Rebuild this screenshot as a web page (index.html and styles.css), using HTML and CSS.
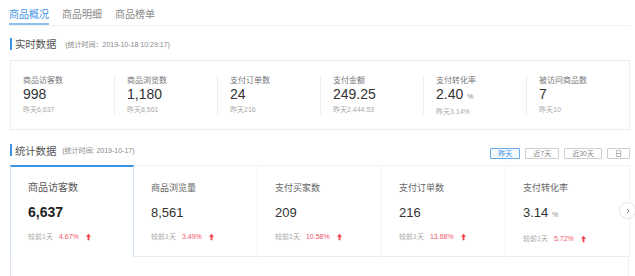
FILE: index.html
```html
<!DOCTYPE html>
<html lang="zh-CN">
<head>
<meta charset="utf-8">
<title>商品概况</title>
<link rel="stylesheet" href="styles.css">
</head>
<body>
<div class="page">
  <nav class="tabs">
    <span class="tab active">商品概况</span>
    <span class="tab">商品明细</span>
    <span class="tab">商品榜单</span>
  </nav>

  <div class="sec-head first">
    <span class="bar"></span>
    <span class="sec-title">实时数据</span>
    <span class="sec-sub wide">(统计时间：2019-10-18 10:29:17)</span>
  </div>

  <div class="rt-card">
    <div class="rt-col">
      <div class="rt-label">商品访客数</div>
      <div class="rt-value">998</div>
      <div class="rt-prev">昨天6,637</div>
    </div>
    <div class="rt-col">
      <div class="rt-label">商品浏览数</div>
      <div class="rt-value">1,180</div>
      <div class="rt-prev">昨天8,561</div>
    </div>
    <div class="rt-col">
      <div class="rt-label">支付订单数</div>
      <div class="rt-value">24</div>
      <div class="rt-prev">昨天216</div>
    </div>
    <div class="rt-col">
      <div class="rt-label">支付金额</div>
      <div class="rt-value">249.25</div>
      <div class="rt-prev">昨天2,444.53</div>
    </div>
    <div class="rt-col">
      <div class="rt-label">支付转化率</div>
      <div class="rt-value">2.40 <span class="unit">%</span></div>
      <div class="rt-prev">昨天3.14%</div>
    </div>
    <div class="rt-col">
      <div class="rt-label">被访问商品数</div>
      <div class="rt-value">7</div>
      <div class="rt-prev">昨天10</div>
    </div>
  </div>

  <div class="sec-head second">
    <span class="bar"></span>
    <span class="sec-title">统计数据</span>
    <span class="sec-sub">(统计时间: 2019-10-17)</span>
    <div class="ranges">
      <span class="range on">昨天</span>
      <span class="range">近7天</span>
      <span class="range">近30天</span>
      <span class="range">日</span>
    </div>
  </div>

  <div class="stats">
    <div class="stat-row">
      <div class="stat active">
        <div class="st-label">商品访客数</div>
        <div class="st-value">6,637</div>
        <div class="st-cmp">较前1天<span class="pct">4.67%</span><svg class="up" viewBox="0 0 6 8"><path d="M3 0 L6 3.6 L4.1 3.6 L4.1 8 L1.9 8 L1.9 3.6 L0 3.6 Z"/></svg></div>
      </div>
      <div class="stat">
        <div class="st-label">商品浏览量</div>
        <div class="st-value">8,561</div>
        <div class="st-cmp">较前1天<span class="pct">3.49%</span><svg class="up" viewBox="0 0 6 8"><path d="M3 0 L6 3.6 L4.1 3.6 L4.1 8 L1.9 8 L1.9 3.6 L0 3.6 Z"/></svg></div>
      </div>
      <div class="stat">
        <div class="st-label">支付买家数</div>
        <div class="st-value">209</div>
        <div class="st-cmp">较前1天<span class="pct">10.58%</span><svg class="up" viewBox="0 0 6 8"><path d="M3 0 L6 3.6 L4.1 3.6 L4.1 8 L1.9 8 L1.9 3.6 L0 3.6 Z"/></svg></div>
      </div>
      <div class="stat">
        <div class="st-label">支付订单数</div>
        <div class="st-value">216</div>
        <div class="st-cmp">较前1天<span class="pct">13.68%</span><svg class="up" viewBox="0 0 6 8"><path d="M3 0 L6 3.6 L4.1 3.6 L4.1 8 L1.9 8 L1.9 3.6 L0 3.6 Z"/></svg></div>
      </div>
      <div class="stat">
        <div class="st-label">支付转化率</div>
        <div class="st-value">3.14 <span class="unit">%</span></div>
        <div class="st-cmp">较前1天<span class="pct">5.72%</span><svg class="up" viewBox="0 0 6 8"><path d="M3 0 L6 3.6 L4.1 3.6 L4.1 8 L1.9 8 L1.9 3.6 L0 3.6 Z"/></svg></div>
      </div>
      <span class="next"><svg viewBox="0 0 8 8"><path d="M3 2 L5 4 L3 6" fill="none" stroke="#8a8a8a" stroke-width="1"/></svg></span>
    </div>
    <div class="panel"></div>
  </div>
</div>
</body>
</html>
```

FILE: styles.css
```css
* { box-sizing: border-box; }
html, body { margin: 0; padding: 0; background: #fff; }
body {
  font-family: "Liberation Sans", "Noto Sans CJK SC", sans-serif;
  color: #333;
}
.page { padding: 0 5px 0 10px; width: 635px; }

.tabs {
  display: flex;
  gap: 13px;
  height: 26px;
  border-bottom: 1px solid #f0f0f0;
  margin-left: -1px;
}
.tab {
  font-size: 10px;
  line-height: 14px;
  padding-top: 8px;
  height: 25px;
  color: #888;
  border-bottom: 2px solid transparent;
}
.tab.active { color: #3d93e6; border-bottom-color: #8cc0ef; }

.sec-head { display: flex; align-items: center; height: 13px; }
.sec-head.first { margin-top: 11px; margin-bottom: 10px; }
.sec-head.second { margin-top: 13px; margin-bottom: 8px; height: 14px; }
.bar { width: 2px; height: 12px; background: #3d93e6; margin-right: 3px; }
.sec-title { color: #555; letter-spacing: -0.2px; font-size: 10.5px; }
.sec-sub { font-size: 7px; color: #888; margin-left: 6px; }
.sec-sub.wide { margin-left: 9px; }

.ranges { margin-left: auto; display: flex; gap: 5px; align-self: flex-end; margin-bottom: -2px; }
.range {
  font-size: 7px;
  line-height: 9px;
  height: 11px;
  padding: 0 7px;
  border: 1px solid #cfcfcf;
  border-radius: 1px;
  color: #888;
}
.range.on { border-color: #6aa9e8; color: #3d93e6; background: #f4f9fe; }

.rt-card {
  display: grid;
  grid-template-columns: repeat(6, 1fr);
  border: 1px solid #eeeeee;
  padding: 14px 0;
  height: 70px;
}
.rt-col { border-left: 1px solid #eeeeee; padding-left: 12px; height: 40px; }
.rt-col:first-child { border-left: none; padding-left: 12px; }
.rt-label { font-size: 8px; line-height: 11px; color: #777; }
.rt-value { font-size: 14px; line-height: 15px; color: #333; margin-top: 1px; }
.rt-value .unit, .st-value .unit { font-size: 7px; color: #888; }
.rt-prev { font-size: 7px; line-height: 11px; color: #aaa; margin-top: 2px; }

.stats { position: relative; }
.stat-row {
  position: relative;
  display: grid;
  grid-template-columns: repeat(5, 1fr);
}
.stat {
  height: 92px;
  padding: 15px 0 0 17px;
  border-top: 1px solid #eef1f5;
  border-right: 1px solid #f2f4f7;
  border-bottom: 1px solid #e9eef4;
}
.stat:last-of-type { border-right: 1px solid #edf1f5; }
.stat.active {
  border-top: 2px solid #3d95e8;
  border-left: 1px solid #cfe3f5;
  border-right: 1px solid #cfe3f5;
  border-bottom: none;
  padding-top: 14px;
}
.st-label { font-size: 9px; line-height: 14px; color: #666; }
.stat.active .st-label { font-size: 10px; color: #555; }
.st-value { font-size: 13px; line-height: 19px; margin-top: 8px; color: #333; }
.stat.active .st-value { font-size: 14px; font-weight: bold; color: #222; }
.st-cmp { font-size: 7px; line-height: 10px; margin-top: 10px; color: #aaa; display: flex; align-items: center; }
.pct { color: #f2566d; margin-left: 6px; }
.up { width: 5px; height: 8px; fill: #f0404f; margin-left: 7px; }

.next {
  position: absolute;
  right: -6px;
  top: 37px;
  width: 17px;
  height: 17px;
  border: 1px solid #e4e4e4;
  border-radius: 50%;
  background: #fff;
  display: flex;
  align-items: center;
  justify-content: center;
}
.next svg { width: 8px; height: 8px; }

.panel {
  height: 30px;
  border-left: 1px solid #d8e6f3;
  border-right: 1px solid #edf1f5;
  margin-right: 1px;
}
```
